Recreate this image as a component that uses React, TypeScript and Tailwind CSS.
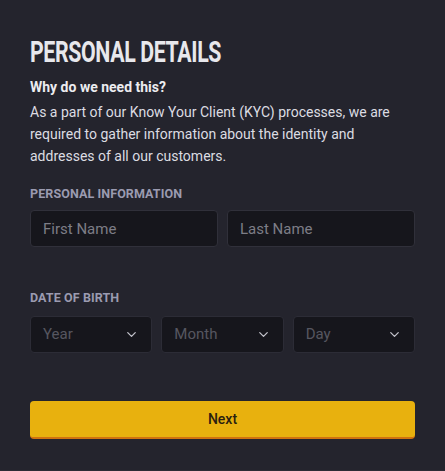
import React from 'react';
import { ChevronDown } from 'lucide-react';

const selects = ['Year', 'Month', 'Day'];

export default function App() {
  return (
    <div className="w-[445px] h-[471px] bg-[#24242d] px-[30px] pt-[36px] font-['Roboto',sans-serif] text-[#e6e6ea] border-b border-[#2c2c35]">
      <h1 className="h-[32px] font-['Roboto',sans-serif] font-bold text-[29px] leading-[32px] tracking-[-0.5px] text-[#e8e8ec] uppercase whitespace-nowrap origin-left scale-x-[0.735]">
        Personal Details
      </h1>
      <p className="mt-[9px] text-[14px] leading-[20px] font-bold text-[#ececf0]">Why do we need this?</p>
      <p className="mt-[4px] text-[14px] leading-[22px] text-[#dcdce2]">
        As a part of our Know Your Client (KYC) processes, we are required to gather information about the identity and addresses of all our customers.
      </p>

      <div className="mt-[20px] text-[12.5px] leading-[14px] font-bold tracking-[0.1px] text-[#9b9bb0] uppercase">
        Personal Information
      </div>
      <div className="mt-[9px] grid grid-cols-2 gap-[9px]">
        {['First Name', 'Last Name'].map((p) => (
          <input
            key={p}
            placeholder={p}
            className="h-[37px] w-full rounded-[4px] bg-[#16161c] border border-[#30303a] px-[12px] text-[15px] text-[#e6e6ea] placeholder:text-[#7d7d86] outline-none"
          />
        ))}
      </div>

      <div className="mt-[44px] text-[12.5px] leading-[14px] font-bold tracking-[0.1px] text-[#9b9bb0] uppercase">
        Date of Birth
      </div>
      <div className="mt-[11px] grid grid-cols-3 gap-[9px]">
        {selects.map((s) => (
          <div
            key={s}
            className="h-[37px] rounded-[4px] bg-[#16161c] border border-[#2c2c36] pl-[12px] pr-[12px] flex items-center justify-between"
          >
            <span className="text-[15px] text-[#565660]">{s}</span>
            <ChevronDown className="w-[15px] h-[15px] text-[#c4c4cc]" strokeWidth={2} />
          </div>
        ))}
      </div>

      <button
        type="button"
        className="mt-[48px] w-full h-[38px] rounded-[4px] bg-[#e8b10e] border-b-[2px] border-[#d0720f] text-[14px] font-medium text-[#2a2010] flex items-center justify-center"
      >
        Next
      </button>
    </div>
  );
}
